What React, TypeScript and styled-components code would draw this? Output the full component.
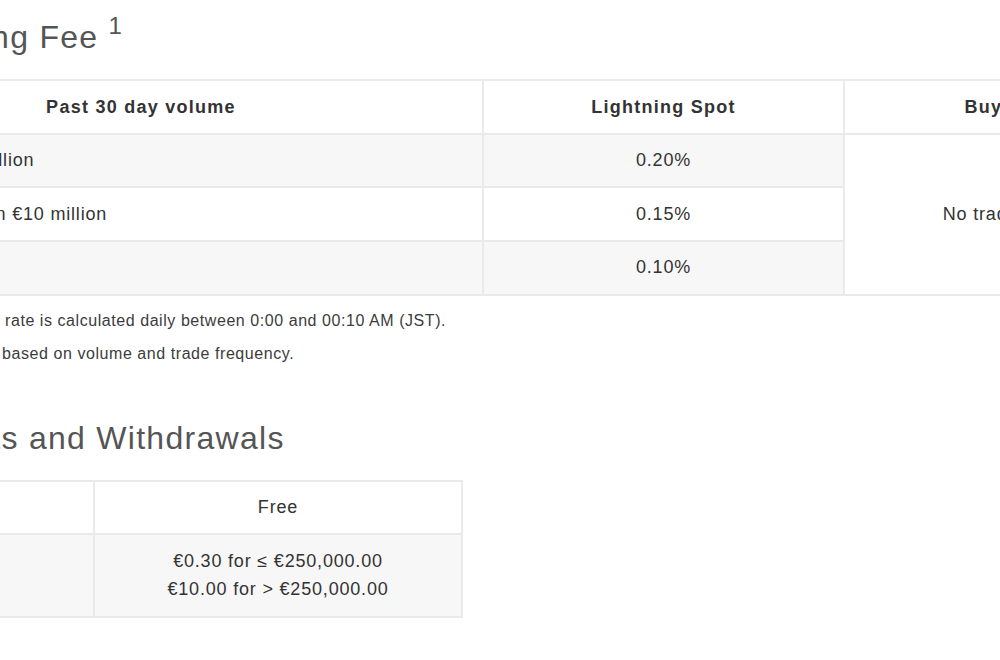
import styled, { createGlobalStyle } from 'styled-components';

const GlobalStyle = createGlobalStyle`
  html, body {
    margin: 0;
    padding: 0;
    background: #fff;
    overflow: hidden;
  }
  body {
    font-family: 'Liberation Sans', Arial, sans-serif;
    color: #333;
  }
`;

// the page is scrolled sideways, so the content starts left of the viewport
const Page = styled.main`
  width: 1300px;
  margin-left: -116px;
  padding-top: 20px;
`;

const Section = styled.section`
  margin-bottom: 55px;
`;

const Title = styled.h2<{ $indent?: number }>`
  margin: 0 0 24px;
  padding-left: ${(p) => p.$indent || 0}px;
  font-size: 32px;
  font-weight: 400;
  line-height: 1.1;
  letter-spacing: 0.04em;
  color: #555;

  sup {
    font-size: 24px;
    line-height: 0;
    position: relative;
    top: -2px;
    vertical-align: super;
  }
`;

const Table = styled.table<{ $width: number }>`
  width: ${(p) => p.$width}px;
  border-collapse: collapse;
  table-layout: fixed;
  font-size: 18px;
  line-height: 1.6;
  margin-bottom: 13px;
`;

const Th = styled.th<{ $padLeft?: number; $padRight?: number }>`
  border: 2px solid #eaeaea;
  padding: 11.4px ${(p) => p.$padRight ?? 12}px 11.4px ${(p) => p.$padLeft ?? 12}px;
  font-weight: 700;
  letter-spacing: 0.07em;
  text-align: center;
  color: #333;
  background: #fff;
`;

const Td = styled.td<{ $shade?: boolean; $align?: string; $padLeft?: number }>`
  border: 2px solid #eaeaea;
  padding: 11.4px 12px 11.4px ${(p) => p.$padLeft ?? 12}px;
  letter-spacing: 0.045em;
  text-align: ${(p) => p.$align || 'center'};
  vertical-align: middle;
  color: #333;
  background: ${(p) => (p.$shade ? '#f7f7f7' : '#fff')};
`;

const Note = styled.p<{ $indent?: number }>`
  margin: 0 0 9px;
  padding-left: ${(p) => p.$indent || 0}px;
  font-size: 16px;
  line-height: 1.5;
  letter-spacing: 0.035em;
  color: #3c3c3c;
`;

const tiers = [
  { volume: '0 - €1 million', rate: '0.20%' },
  { volume: 'Less than €10 million', rate: '0.15%' },
  { volume: '≥ €10M', rate: '0.10%' },
];

export default function App() {
  return (
    <>
      <GlobalStyle />
      <Page>
        <Section>
          <Title $indent={29}>
            Trading Fee <sup>1</sup>
          </Title>
          <Table $width={1281}>
            <colgroup>
              <col style={{ width: 598 }} />
              <col style={{ width: 361 }} />
              <col style={{ width: 322 }} />
            </colgroup>
            <thead>
              <tr>
                <Th $padLeft={8} $padRight={94}>
                  Past 30 day volume
                </Th>
                <Th>Lightning Spot</Th>
                <Th>Buy/Sell</Th>
              </tr>
            </thead>
            <tbody>
              {tiers.map((tier, i) => (
                <tr key={tier.rate}>
                  <Td $shade={i % 2 === 0} $align="left" $padLeft={35}>
                    {tier.volume}
                  </Td>
                  <Td $shade={i % 2 === 0}>{tier.rate}</Td>
                  {i === 0 && <Td rowSpan={3}>No trading fee</Td>}
                </tr>
              ))}
            </tbody>
          </Table>
          <Note>The trading fee rate is calculated daily between 0:00 and 00:10 AM (JST).</Note>
          <Note $indent={3}>Fee rates vary based on volume and trade frequency.</Note>
        </Section>

        <Section>
          <Title>Deposits and Withdrawals</Title>
          <Table $width={577}>
            <colgroup>
              <col style={{ width: 209 }} />
              <col style={{ width: 368 }} />
            </colgroup>
            <tbody>
              <tr>
                <Td $align="left">Deposit</Td>
                <Td>Free</Td>
              </tr>
              <tr>
                <Td $shade $align="left">
                  Withdrawal
                </Td>
                <Td $shade>
                  €0.30 for ≤ €250,000.00
                  <br />
                  €10.00 for &gt; €250,000.00
                </Td>
              </tr>
            </tbody>
          </Table>
        </Section>
      </Page>
    </>
  );
}
